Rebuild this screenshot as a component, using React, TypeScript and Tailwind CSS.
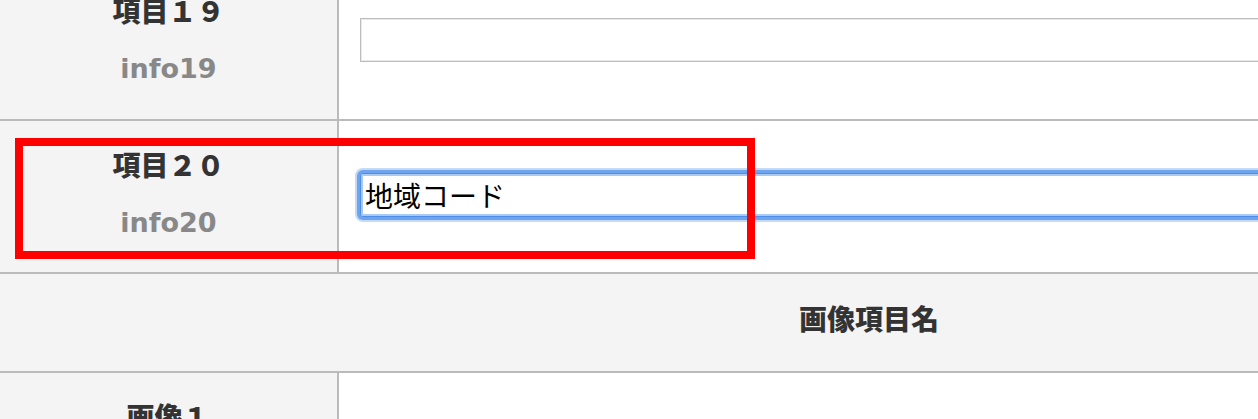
const cjk = "font-['Noto_Sans_CJK_JP',sans-serif]";

function LabelCell({ title, sub, top }: { title: string; sub?: string; top: string }) {
  return (
    <div className={`w-[339px] shrink-0 border-r-2 border-[#bbbbbb] bg-[#f4f4f4] text-center ${top}`}>
      <div className={`${cjk} h-[40px] text-[28px] font-black leading-[40px] text-[#333333]`}>{title}</div>
      {sub && (
        <div className="mt-[19px] h-[40px] font-['DejaVu_Sans',sans-serif] text-[27px] font-bold leading-[40px] text-[#888888]">
          {sub}
        </div>
      )}
    </div>
  );
}

export default function App() {
  return (
    <div className="h-[419px] w-[1258px] overflow-hidden bg-white">
      <div className="-mt-[32px] w-[1738px]">
        {/* 項目19 */}
        <div className="flex h-[153px] border-b-2 border-[#bbbbbb]">
          <LabelCell title="項目１９" sub="info19" top="pt-[22px]" />
          <div className="flex flex-1 items-center pb-[7px] pl-[21px]">
            <input
              type="text"
              defaultValue=""
              className={`${cjk} h-[44px] w-full border border-[#bdbdbd] bg-white px-[4px] text-[28px] text-black shadow-[inset_0_0_0_1px_#e9e9e9] outline-none`}
            />
          </div>
        </div>

        {/* 項目20 (highlighted) */}
        <div className="relative flex h-[153px] border-b-2 border-[#bbbbbb]">
          <LabelCell title="項目２０" sub="info20" top="pt-[23px]" />
          <div className="flex flex-1 items-center pb-[3px] pl-[21px]">
            <input
              type="text"
              defaultValue="地域コード"
              className={`${cjk} h-[44px] w-full rounded-[3px] border border-[#4f8ee8] bg-white px-[4px] text-[28px] text-black shadow-[0_0_0_3px_#6ea4ee,0_0_0_5px_#c3dbf7,inset_0_0_0_2px_#a9caf3] outline-none`}
            />
          </div>
          <div className="pointer-events-none absolute left-[15px] top-[17px] h-[121px] w-[740px] border-[8px] border-[#ff0000]" />
        </div>

        {/* header */}
        <div className="flex h-[99px] items-center justify-center border-b-2 border-[#bbbbbb] bg-[#f4f4f4] pb-[10px]">
          <span className={`${cjk} text-[28px] font-black text-[#333333]`}>画像項目名</span>
        </div>

        {/* 画像1 */}
        <div className="flex h-[153px] border-b-2 border-[#bbbbbb]">
          <LabelCell title="画像１" top="pt-[23px]" />
          <div className="flex-1" />
        </div>
      </div>
    </div>
  );
}
